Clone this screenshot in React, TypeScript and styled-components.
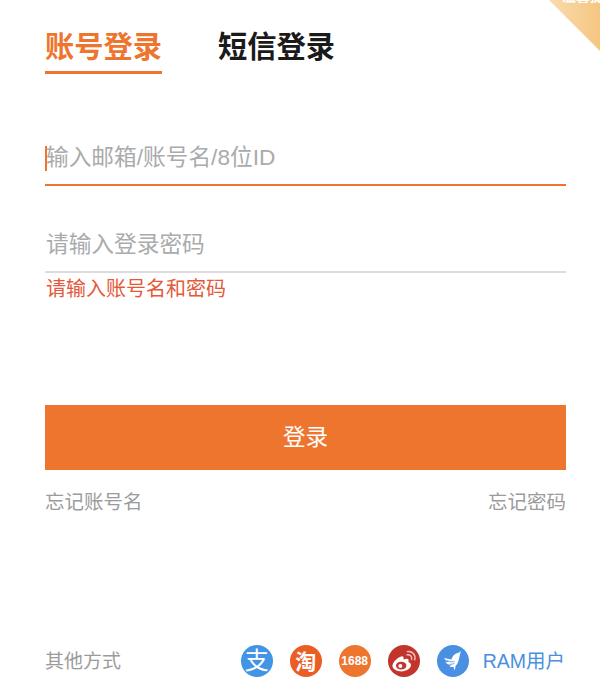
import React from "react";
import styled, { createGlobalStyle } from "styled-components";

const GlobalStyle = createGlobalStyle`
  html, body {
    margin: 0;
    padding: 0;
    background: #fff;
    font-family: "Liberation Sans", "Noto Sans CJK SC", sans-serif;
  }
`;

const App: React.FC = () => {
  return (
    <Page>
      <GlobalStyle />
      <CornerBadge>
        <CornerText>温馨提示</CornerText>
      </CornerBadge>
      <Tabs>
        <Tab $active>账号登录</Tab>
        <Tab>短信登录</Tab>
      </Tabs>
      <AccountField $focused>
        <Caret />
        <FieldInput placeholder="输入邮箱/账号名/8位ID" />
      </AccountField>
      <PasswordField>
        <FieldInput type="password" placeholder="请输入登录密码" />
      </PasswordField>
      <ErrorMsg>请输入账号名和密码</ErrorMsg>
      <SubmitButton>登录</SubmitButton>
      <LinkRow>
        <span>忘记账号名</span>
        <span>忘记密码</span>
      </LinkRow>
      <OtherRow>
        <OtherLabel>其他方式</OtherLabel>
        <IconList>
          <RoundIcon $bg="#4295e4" $size={24}>支</RoundIcon>
          <RoundIcon $bg="#ea5e24" $size={21} $bold>淘</RoundIcon>
          <RoundIcon $bg="#ee752e" $size={12} $bold>1688</RoundIcon>
          <RoundIcon $bg="#c2352d">
            <svg width="26" height="23" viewBox="0 0 25 22">
              <path
                d="M10 20.500c-4.600 0-8.600-2.100-8.600-5.400 0-3.300 5-8.300 8.500-9 2-.4 2.600 1 2.100 3 2.300-1 5-1.100 5 .9 0 .6-.2 1-.4 1.400 1.400.5 2.600 1.300 2.600 3 0 3.200-4.600 6.100-9.200 6.100z"
                fill="#fff"
              />
              <ellipse cx="9.800" cy="15" rx="5" ry="3.800" fill="#c2352d" />
              <circle cx="9" cy="15.300" r="1.900" fill="#fff" />
              <path
                d="M15.500 4.500c2.600-.5 5 1.800 4.300 4.500M15.800 1.500c4.600-.8 8.200 3.200 7 7.800"
                fill="none"
                stroke="#f0c4c0"
                strokeWidth="1.400"
                strokeLinecap="round"
              />
            </svg>
          </RoundIcon>
          <RoundIcon $bg="#4a90e2">
            <svg width="32" height="32" viewBox="0 0 32 32">
              <path
                d="M24 6c-2 2-4.500 2-6.500 3.500-2 1.500-2.500 3.500-3 5L7 13c1 2 3 3.200 5.500 3.800l-4 .5c1.800 2 4 2.700 6.200 2.500l-2.200 1.400c1.200 1 2.800 1 4 .5l1 3.800c.6-1.800 1-3 1-4.500 3.500-2.500 3.500-9.500 5.500-15z"
                fill="#fff"
              />
              <path
                d="M10 15.500c3 1.500 5 1.500 7.500 1M12.500 19.200c2 .2 3.500-.2 5-1"
                fill="none"
                stroke="#4a90e2"
                strokeWidth="0.800"
              />
            </svg>
          </RoundIcon>
        </IconList>
        <RamLink>RAM用户</RamLink>
      </OtherRow>
    </Page>
  );
};

const Page = styled.div`
  position: relative;
  box-sizing: border-box;
  width: 600px;
  height: 689px;
  padding: 27px 34px 0 45px;
  overflow: hidden;
  background: #fff;
`;

const CornerBadge = styled.div`
  position: absolute;
  top: 0;
  right: 0;
  width: 51px;
  height: 51px;
  background: linear-gradient(to right, #f8dcb0, #f5c680);
  clip-path: polygon(0 0, 100% 0, 100% 100%);
  overflow: hidden;
`;

const CornerText = styled.div`
  position: absolute;
  top: -12px;
  left: 13px;
  white-space: nowrap;
  color: #fff;
  font-size: 14px;
  font-weight: 700;
  line-height: 16px;
`;

const Tabs = styled.div`
  display: flex;
  gap: 56px;
`;

const Tab = styled.div<{ $active?: boolean }>`
  height: 44px;
  line-height: 41px;
  font-size: 29.250px;
  font-weight: 700;
  color: ${(p) => (p.$active ? "#ee752e" : "#1a1a1a")};
  border-bottom: 3px solid ${(p) => (p.$active ? "#ee752e" : "transparent")};
`;

const Field = styled.div<{ $focused?: boolean }>`
  position: relative;
  display: flex;
  align-items: center;
  box-sizing: border-box;
  padding-top: 1px;
  border-bottom: 2px solid ${(p) => (p.$focused ? "#ee752e" : "#dcdcdc")};
`;

const AccountField = styled(Field)`
  margin-top: 56px;
  height: 56px;
`;

const PasswordField = styled(Field)`
  margin-top: 30px;
  height: 57px;
`;

const Caret = styled.div`
  position: absolute;
  left: 0;
  top: 16px;
  width: 2px;
  height: 25px;
  background: #ee752e;
`;

const FieldInput = styled.input`
  flex: 1;
  min-width: 0;
  height: 100%;
  padding: 0 0 0 1px;
  border: 0;
  outline: 0;
  background: transparent;
  font-family: inherit;
  font-size: 22.700px;
  color: #333;

  &::placeholder {
    color: #a9abad;
    opacity: 1;
  }
`;

const ErrorMsg = styled.div`
  margin-top: 2px;
  height: 28px;
  line-height: 28px;
  padding-left: 1px;
  font-size: 20px;
  color: #e5593a;
`;

const SubmitButton = styled.button`
  display: block;
  width: 100%;
  height: 65px;
  margin-top: 102px;
  padding: 0 0 6px;
  border: 0;
  background: #ee752e;
  color: #fff;
  font-family: inherit;
  font-size: 22.500px;
`;

const LinkRow = styled.div`
  display: flex;
  justify-content: space-between;
  margin-top: 17px;
  line-height: 30px;
  font-size: 19.500px;
  color: #9b9b9b;
`;

const OtherRow = styled.div`
  display: flex;
  align-items: center;
  margin-top: 126px;
  height: 36px;
`;

const OtherLabel = styled.div`
  padding-bottom: 3px;
  font-size: 19px;
  color: #9b9b9b;
`;

const IconList = styled.div`
  display: flex;
  gap: 17px;
  margin-left: auto;
`;

const RoundIcon = styled.div<{ $bg: string; $size?: number; $bold?: boolean }>`
  display: flex;
  align-items: center;
  justify-content: center;
  width: 32px;
  height: 32px;
  border-radius: 50%;
  background: ${(p) => p.$bg};
  color: #fff;
  font-size: ${(p) => p.$size ?? 14}px;
  font-weight: ${(p) => (p.$bold ? 700 : 400)};
  line-height: 1;
`;

const RamLink = styled.div`
  margin-left: 14px;
  padding: 0 1px 3px 0;
  font-size: 19.500px;
  color: #4a90e2;
`;

export default App;
